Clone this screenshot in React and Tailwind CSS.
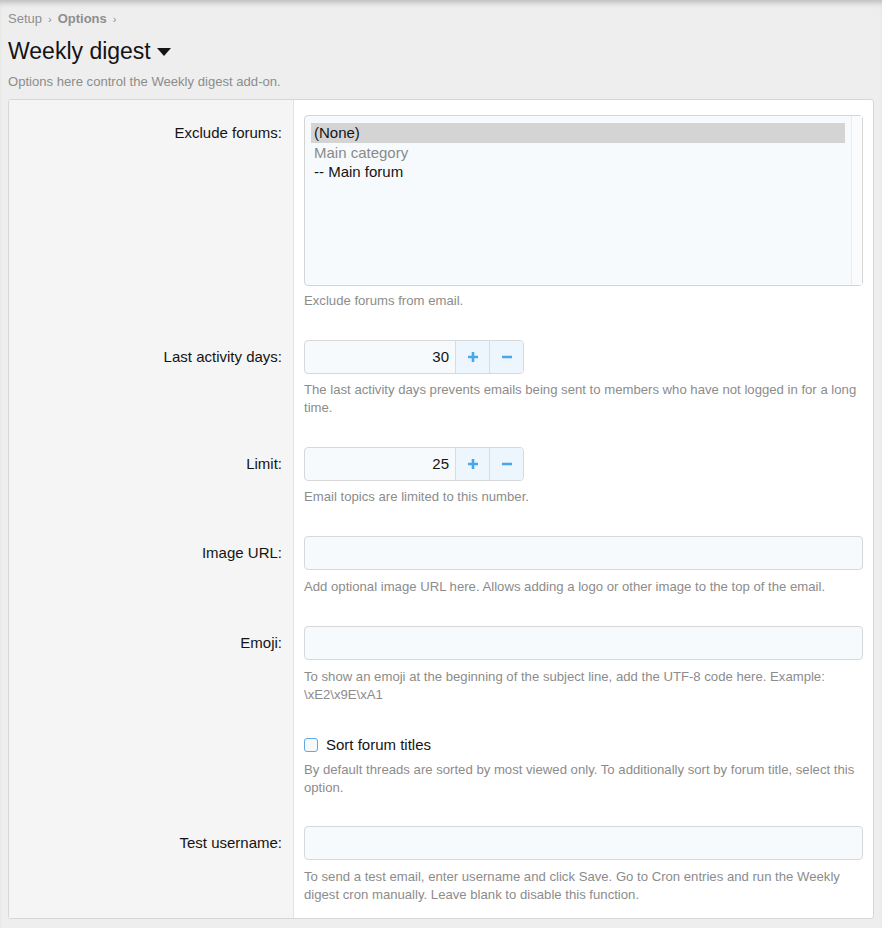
import React from "react";

const font = { fontFamily: '"Liberation Sans", Arial, sans-serif' };

function Row({ label, children, help, labelPt = "pt-[8px]", helpMt = "mt-[8px]", pt = "pt-[15px]", pb = "pb-[15px]" }) {
  return (
    <div className="flex">
      <div className={`w-[285px] shrink-0 bg-[#f5f5f5] border-r border-[#e3e3e3] pr-[11px] text-right text-[15px] leading-[18px] text-[#141414] ${pt} ${pb}`}>
        <div className={labelPt}>{label}</div>
      </div>
      <div className={`flex-1 px-[10px] ${pt} ${pb}`}>
        {children}
        {help && (
          <div className={`${helpMt} text-[13.15px] leading-[18px] text-[#8c8c8c]`}>{help}</div>
        )}
      </div>
    </div>
  );
}

function TextInput() {
  return <div className="h-[34px] w-full rounded-[4px] border border-[#d8d8d8] bg-[#f7fafd]" />;
}

function NumberInput({ value }) {
  return (
    <div className="flex h-[34px] w-[220px] rounded-[4px] border border-[#d8d8d8] bg-[#f7fafd] overflow-hidden">
      <div className="flex-1 flex items-center justify-end pr-[6px] text-[15px] text-[#141414]">{value}</div>
      <div className="w-[34px] flex items-center justify-center border-l border-[#dcdcdc] bg-[#edf5fd]">
        <svg width="12" height="12" viewBox="0 0 12 12"><path d="M6 1v10M1 6h10" stroke="#47a7eb" strokeWidth="2.6" /></svg>
      </div>
      <div className="w-[34px] flex items-center justify-center border-l border-[#dcdcdc] bg-[#edf5fd]">
        <svg width="12" height="12" viewBox="0 0 12 12"><path d="M1 6h10" stroke="#47a7eb" strokeWidth="2.6" /></svg>
      </div>
    </div>
  );
}

export default function App() {
  return (
    <div style={font} className="min-h-[928px] w-[882px] bg-[#eeeeee] shadow-[inset_0_6px_6px_-4px_rgba(0,0,0,0.25)] pt-[11px] pb-[8px]">
      <div className="px-[8px]">
        <div className="text-[13px] leading-[16px] text-[#8e8e8e] flex items-center gap-[6px]">
          <span>Setup</span>
          <span className="text-[11px]">›</span>
          <span className="font-bold">Options</span>
          <span className="text-[11px]">›</span>
        </div>
        <div className="mt-[9px] flex items-center gap-[6px]">
          <h1 className="text-[23px] leading-[30px] text-[#141414]">Weekly digest</h1>
          <svg width="14" height="8" viewBox="0 0 14 8" className="mt-[1px]"><path d="M0 0h14L7 8z" fill="#141414" /></svg>
        </div>
        <div className="mt-[7px] text-[13.1px] leading-[18px] text-[#8c8c8c]">Options here control the Weekly digest add-on.</div>
      </div>
      <div className="mx-[8px] mt-[8px] w-[866px] rounded-[3px] border border-[#d6d6d6] bg-white overflow-hidden">
        <Row label="Exclude forums:" help="Exclude forums from email." labelPt="pt-[9px]" helpMt="mt-[6px]">
          <div className="relative h-[171px] w-full rounded-[4px] border border-[#d4d4d4] bg-[#f7fafd] pl-[6px] pr-[17px] pt-[7px] text-[15px] leading-[19px]">
            <div className="bg-[#d4d4d4] pl-[3px] h-[20px] leading-[20px] text-[#141414]">(None)</div>
            <div className="pl-[3px] text-[#8a8a8a]">Main category</div>
            <div className="pl-[3px] text-[#141414]">-- Main forum</div>
            <div className="absolute right-0 top-0 bottom-0 w-[11px] border-l border-[#ececec] bg-[#fafbfc]" />
          </div>
        </Row>
        <Row label="Last activity days:" helpMt="mt-[7px]" help="The last activity days prevents emails being sent to members who have not logged in for a long time.">
          <NumberInput value="30" />
        </Row>
        <Row label="Limit:" helpMt="mt-[7px]" help="Email topics are limited to this number.">
          <NumberInput value="25" />
        </Row>
        <Row label="Image URL:" help="Add optional image URL here. Allows adding a logo or other image to the top of the email.">
          <TextInput />
        </Row>
        <Row label="Emoji:" help={<>To show an emoji at the beginning of the subject line, add the UTF-8 code here. Example:<br />\xE2\x9E\xA1</>}>
          <TextInput />
        </Row>
        <Row label="" pt="pt-[16px]" pb="pb-[14px]" helpMt="mt-[6px]" help="By default threads are sorted by most viewed only. To additionally sort by forum title, select this option.">
          <div className="flex items-center h-[20px] gap-[8px] text-[15px] text-[#141414]">
            <div className="w-[14px] h-[14px] rounded-[3px] border border-[#62a8e0] bg-[#f7fafd]" />
            <span>Sort forum titles</span>
          </div>
        </Row>
        <Row label="Test username:" pb="pb-[14px]" help="To send a test email, enter username and click Save. Go to Cron entries and run the Weekly digest cron manually. Leave blank to disable this function.">
          <TextInput />
        </Row>
      </div>
    </div>
  );
}
